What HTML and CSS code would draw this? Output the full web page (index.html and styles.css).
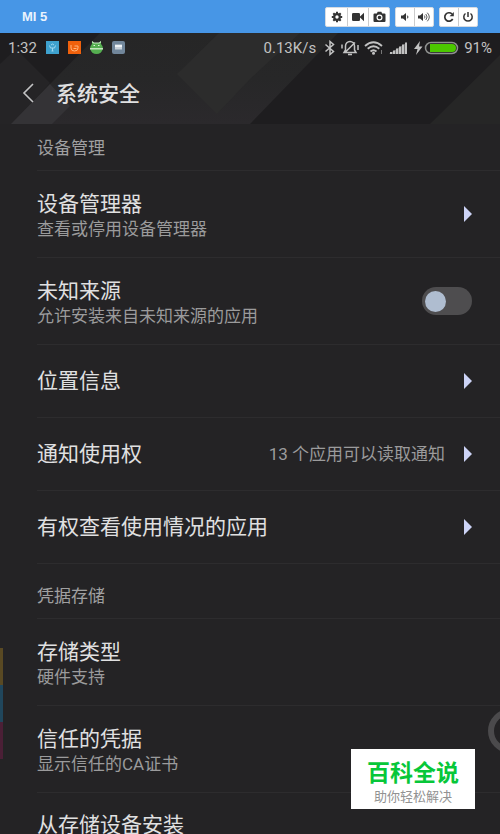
FILE: index.html
```html
<!DOCTYPE html>
<html lang="zh-CN">
<head>
<meta charset="utf-8">
<meta name="viewport" content="width=device-width, initial-scale=1">
<title>系统安全</title>
<link rel="stylesheet" href="styles.css">
</head>
<body>
<div class="window">
  <header class="toolbar">
    <span class="device">MI 5</span>
    <div class="tools">
      <div class="group">
        <button type="button" aria-label="设置"><svg width="12" height="12" viewBox="0 0 12 12"><circle cx="6" cy="6" r="2.8" fill="none" stroke="currentColor" stroke-width="2.2"/><path d="M6 .8v2M6 9.200v2M.8 6h2M9.200 6h2M2.300 2.300l1.500 1.500M8.200 8.200l1.500 1.500M9.700 2.300L8.200 3.800M3.800 8.200L2.300 9.700" stroke="currentColor" stroke-width="2"/></svg></button>
        <button type="button" aria-label="录像"><svg width="12" height="12" viewBox="0 0 12 12"><rect x="0" y="2" width="8" height="8" rx="1.300" fill="currentColor"/><path d="M7.500 6L12 1.800v8.400z" fill="currentColor"/></svg></button>
        <button type="button" aria-label="截图"><svg width="13" height="12" viewBox="0 0 12 12"><path d="M1 2.500h2.300L4.200.8h3.600l.9 1.700H11q1 0 1 1V10q0 1-1 1H1q-1 0-1-1V3.500q0-1 1-1z" fill="currentColor"/><circle cx="6" cy="6.500" r="2.400" fill="none" stroke="#fff" stroke-width="1.200"/></svg></button>
      </div>
      <div class="group narrow">
        <button type="button" aria-label="音量减"><svg width="12" height="12" viewBox="0 0 12 12"><path d="M2 4.500h2L7 2v8L4 7.500H2z" fill="currentColor"/><path d="M8.300 4.600q1.400 1.400 0 2.800" fill="none" stroke="currentColor"/></svg></button>
        <button type="button" aria-label="音量加"><svg width="12" height="12" viewBox="0 0 12 12"><path d="M0 4.500h2L5 2v8L2 7.500H0z" fill="currentColor"/><path d="M6.300 4.500q1.400 1.500 0 3M7.800 3q2.600 3 0 6M9.300 1.700q4 4.300 0 8.600" fill="none" stroke="currentColor" stroke-width=".8"/></svg></button>
      </div>
      <div class="group narrow">
        <button type="button" aria-label="旋转"><svg width="12" height="12" viewBox="0 0 12 12"><path d="M9.700 8A4.200 4.200 0 1 1 9 3" fill="none" stroke="currentColor" stroke-width="1.700"/><path d="M10.800 1v4.200H6.600z" fill="currentColor"/></svg></button>
        <button type="button" aria-label="电源"><svg width="12" height="12" viewBox="0 0 12 12"><path d="M3.500 2.500a4.200 4.200 0 1 0 5 0M6 1v5" fill="none" stroke="currentColor" stroke-width="1.500"/></svg></button>
      </div>
    </div>
  </header>

  <main class="screen">
    <div class="hero">
      <svg class="pattern" viewBox="0 0 500 91" preserveAspectRatio="none" aria-hidden="true">
        <defs><linearGradient id="band" x1="0" y1="0" x2="0" y2="1"><stop offset="0" stop-color="#262626"/><stop offset=".5" stop-color="#272728"/><stop offset="1" stop-color="#2b292c"/></linearGradient></defs>
        <path d="M100 0H338L250 91H11z" fill="url(#band)"/>
        <path d="M0 31L16 16 50 50 12 91H0z" fill="#252426"/>
        <path d="M50 51L70 73 52 91H11z" fill="#343336"/>
        <path d="M219 0H300L250 46 217 81 177 41z" fill="#2c2c2c"/>
        <path d="M500 22V91H430z" fill="#262626"/>
      </svg>
      <div class="status">
        <span class="time">1:32</span>
        <div class="notices">
          <svg width="13" height="13" viewBox="0 0 13 13"><path fill="#3ea1ce" d="M0 0h13v13H0z"/><path d="M3.500 4.500l1 2.500h4l1-2.500M6.500 7v3M5 4l1.500-1L8 4M5.500 10h2" fill="none" stroke="#9fd8f0"/></svg>
          <svg width="13" height="13" viewBox="0 0 13 13"><path fill="#f0610c" d="M0 0h13v13H0z"/><path d="M3 4v3a3.500 3 0 0 0 7 0V5H6.500M5.500 7.500h3" fill="none" stroke="#ffb47b"/></svg>
          <svg width="13" height="13" viewBox="0 0 13 13"><path d="M2 0l2 2h5l2-2v3q2 2 2 4.500Q11.500 13 6.500 13T0 7.500Q0 5 2 3z" fill="#55ae50"/><path d="M2 0l2 1.500h5L11 0v1.500L9.500 2.500h-6L2 1.500zM0 7h13v1.500H0z" fill="#c4e7bd"/><path d="M3.500 4h1.500v1H3.500zM8 4h1.500v1H8z" fill="#e5f5df"/></svg>
          <svg width="13" height="13" viewBox="0 0 13 13"><rect width="13" height="13" rx="2" fill="#71869a"/><path d="M3 3.500h7v5H3z" fill="#c9d2da"/><path d="M3 4h7v2H3z" fill="#eef2f5"/></svg>
        </div>
        <div class="signals">
          <span class="speed">0.13K/s</span>
          <svg width="12" height="16" viewBox="0 0 12 16"><path d="M1.500 4.500l8 7L6 14.500v-13l3.500 3-8 7" fill="none" stroke="currentColor" stroke-width="1.500"/></svg>
          <svg width="18" height="16" viewBox="0 0 18 16"><path d="M3 12.500h12L13.500 10V6A4.500 4.500 0 0 0 4.500 6v4zM7 14.500h4M1 4.500v4M17 5v5M14 2.500L4 12.500" fill="none" stroke="currentColor" stroke-width="1.500"/></svg>
          <svg width="20" height="16" viewBox="0 0 20 16"><path d="M1 6q8.500-7.500 17 0M3.700 8.800q5.800-5 11.600 0M6.500 11.500q3-2.600 6 0" fill="none" stroke="currentColor" stroke-width="1.800"/><circle cx="9.500" cy="13.200" r="1.500" fill="currentColor"/><path d="M17.500 10v4" fill="none" stroke="#777"/></svg>
          <svg width="20" height="16" viewBox="0 0 20 16"><path d="M1 12h2v2H1zM4 10.500h2V14H4zM7 8.500h2V14H7zM10 6.500h2V14h-2zM13 4.500h2V14h-2zM16 2.500h2V14h-2z" fill="currentColor"/><path d="M0 14L18 2.500V14z" fill="currentColor" opacity=".5"/></svg>
          <svg width="45" height="16" viewBox="0 0 45 16"><path d="M6 1L0 9h3.500l-1.500 6 6.500-8.500H5z" fill="currentColor"/><rect x="11.500" y="2.500" width="32" height="11" rx="5.500" fill="#1f1e20" stroke="#8f918f" stroke-width="1.500"/><path d="M16 4h22a4 4 0 0 1 0 8H16z" fill="#4cc800"/></svg>
          <span>91%</span>
        </div>
      </div>
      <div class="titlebar">
        <button type="button" class="back" aria-label="返回"><svg width="14" height="20" viewBox="0 0 14 20"><path d="M11 1L2 10l9 9" fill="none" stroke="#c4c4c5" stroke-width="1.600"/></svg></button>
        <h1>系统安全</h1>
      </div>
    </div>

    <section>
      <h2>设备管理</h2>
      <a class="row tall" href="#admins"><span class="text"><strong>设备管理器</strong><small>查看或停用设备管理器</small></span><i class="arrow"></i></a>
      <label class="row tall"><span class="text"><strong>未知来源</strong><small>允许安装来自未知来源的应用</small></span><input type="checkbox" class="switch"></label>
      <a class="row" href="#location"><span class="text"><strong>位置信息</strong></span><i class="arrow"></i></a>
      <a class="row" href="#notifications"><span class="text"><strong>通知使用权</strong></span><small>13 个应用可以读取通知</small><i class="arrow"></i></a>
      <a class="row" href="#usage"><span class="text"><strong>有权查看使用情况的应用</strong></span><i class="arrow"></i></a>
    </section>
    <section class="storage">
      <h2>凭据存储</h2>
      <a class="row tall" href="#type"><span class="text"><strong>存储类型</strong><small>硬件支持</small></span></a>
      <a class="row tall" href="#trusted"><span class="text"><strong>信任的凭据</strong><small>显示信任的CA证书</small></span></a>
      <a class="row tall last" href="#install"><span class="text"><strong>从存储设备安装</strong></span></a>
    </section>
  </main>

  <div class="edge" aria-hidden="true"><i class="gold"></i><i class="teal"></i><i class="wine"></i></div>
  <div class="assist" aria-hidden="true"></div>
  <aside class="brand"><b>百科全说</b><span>助你轻松解决</span></aside>
</div>
</body>
</html>
```
FILE: styles.css
```css
* { box-sizing: border-box; }

body {
  margin: 0;
  background: #242325;
  color: #e0e0e1;
  font-family: Roboto, "Noto Sans CJK SC", sans-serif;
}

button {
  padding: 0;
  border: 0;
  background: none;
  color: inherit;
}

svg { display: block; }

.window {
  position: relative;
  height: 100vh;
  overflow: hidden;
}

.toolbar {
  display: flex;
  align-items: center;
  justify-content: space-between;
  height: 33px;
  padding: 0 22px;
  background: #4796e6;
}

.device {
  color: #eaf3fd;
  font: bold 13px "Liberation Sans", sans-serif;
}

.tools { display: flex; gap: 5px; }

.group {
  display: flex;
  height: 20px;
  border: 1px solid #d5dbe2;
  border-radius: 2px;
  background: #fff;
}

.group button {
  display: grid;
  place-items: center;
  width: 21px;
  color: #333;
}

.group.narrow button { width: 18px; }
.group.narrow button + button { width: 19px; }
.group button + button { border-left: 1px solid #ccc; }

.hero {
  position: relative;
  height: 91px;
  background: #1e1d1f;
}

.pattern {
  position: absolute;
  inset: 0;
  width: 100%;
  height: 100%;
}

.status {
  position: relative;
  display: flex;
  align-items: center;
  height: 29px;
  padding: 0 8px;
  color: #c2c2c2;
  font-size: 15px;
}

.notices {
  display: flex;
  gap: 9px;
  margin-left: 9px;
}

.signals {
  display: flex;
  align-items: center;
  gap: 5px;
  margin-left: auto;
}

.speed { margin-right: 3px; }

.titlebar {
  position: relative;
  display: flex;
  align-items: center;
  gap: 20px;
  height: 62px;
  padding-left: 22px;
}

h1 {
  margin: 0;
  padding-top: 2px;
  font-size: 21px;
  line-height: 30px;
  font-weight: 500;
}

h2 {
  margin: 0 0 0 37px;
  padding-top: 2px;
  color: #a0a0a1;
  font-size: 17px;
  font-weight: 400;
  line-height: 44px;
}

.storage h2 {
  padding-top: 10px;
  border-top: 1px solid #2d2c2e;
}

.row {
  display: flex;
  align-items: center;
  min-height: 73px;
  margin-left: 37px;
  padding-right: 28px;
  border-top: 1px solid #2d2c2e;
  color: inherit;
  text-decoration: none;
}

.row.tall { min-height: 87px; }

.text {
  display: flex;
  flex: 1;
  flex-direction: column;
}

.tall .text { padding-top: 3px; }

.row.last { align-items: flex-start; }
.last .text { padding-top: 19px; }

strong {
  font-size: 21px;
  font-weight: 400;
  line-height: 26px;
}

small {
  color: #9b9b9c;
  font-size: 17px;
  line-height: 24px;
}

.arrow {
  width: 8px;
  height: 16px;
  margin-left: 19px;
  background: #ccd3f6;
  clip-path: polygon(0 0, 100% 50%, 0 100%);
}

.switch {
  appearance: none;
  display: flex;
  align-items: center;
  width: 50px;
  height: 28px;
  margin: 0;
  padding-left: 3px;
  border-radius: 14px;
  background: #4e4d4f;
}

.switch::before {
  content: "";
  width: 21px;
  height: 21px;
  border-radius: 50%;
  background: #afbdd0;
}

.switch:checked { justify-content: flex-end; padding-right: 3px; }

.edge {
  position: absolute;
  left: 0;
  bottom: 75px;
  width: 3px;
}

.edge i { display: block; height: 37px; }
.gold { background: #594923; }
.teal { background: #20465c; }
.wine { background: #4b1f36; }

.assist {
  position: absolute;
  right: -32px;
  bottom: 81px;
  width: 44px;
  height: 44px;
  border: 6px solid #4b4a4c;
  border-radius: 50%;
}

.brand {
  position: absolute;
  right: 25px;
  bottom: 25px;
  display: flex;
  flex-direction: column;
  align-items: center;
  padding: 11px 16px 4px;
  background: #fff;
}

.brand b {
  color: #07c739;
  font-size: 23px;
  font-weight: 700;
  line-height: 28px;
}

.brand span {
  color: #929292;
  font-size: 13px;
  line-height: 17px;
}
```
